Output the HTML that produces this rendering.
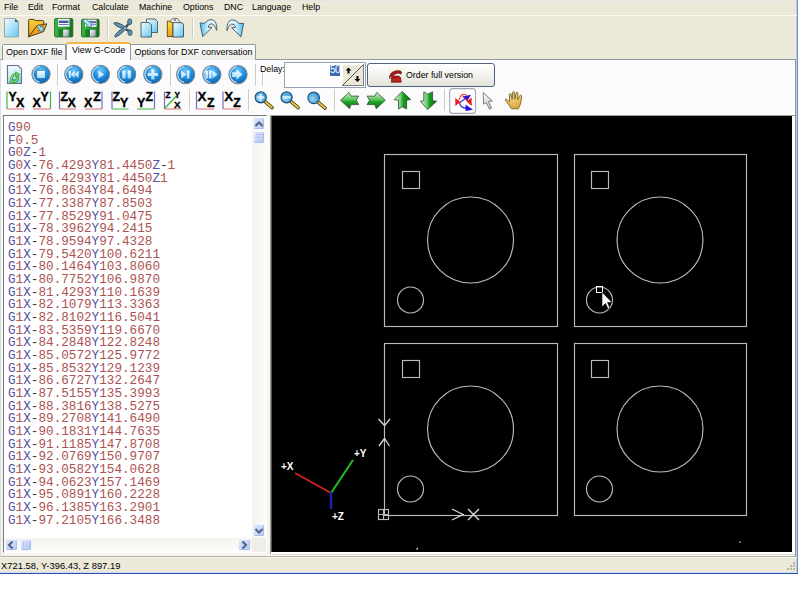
<!DOCTYPE html>
<html><head><meta charset="utf-8"><style>
*{margin:0;padding:0;box-sizing:border-box}
html,body{width:798px;height:605px;overflow:hidden;background:#fff}
body{position:relative;font-family:"Liberation Sans",sans-serif;font-size:8.8px;color:#000}
.a{position:absolute}
.t{position:absolute;white-space:nowrap;line-height:10px}
.code{font-family:"Liberation Mono",monospace;font-size:12.67px;line-height:12.67px;white-space:pre}
.code b{font-weight:normal;color:#52529E}
.code i{font-style:normal;color:#AC5252}
.code u{text-decoration:none;color:#3A3A3A}
.sep{position:absolute;background:#CFCDBF;border-right:1px solid #fff;width:2px}
.sb{position:absolute;background:linear-gradient(135deg,#DCE6FC,#B9CCF7);border:1px solid #F4F7FE;border-radius:2px;box-shadow:inset -1px -1px 0 #A8BDEA}
</style></head><body>
<!-- window bg -->
<div class="a" style="left:0;top:0;width:797px;height:573px;background:#ECE9D8"></div>
<div class="a" style="left:796px;top:0;width:1px;height:573px;background:#B8CCEC"></div>
<div class="a" style="left:797px;top:0;width:1px;height:574px;background:#6E8ED4"></div>
<div class="a" style="left:0;top:572px;width:797px;height:1px;background:#C8DAF0"></div>
<div class="a" style="left:0;top:573px;width:798px;height:1px;background:#3550AC"></div>
<!-- menu -->
<span class="t" style="left:4px;top:2px">File</span>
<span class="t" style="left:28px;top:2px">Edit</span>
<span class="t" style="left:52px;top:2px">Format</span>
<span class="t" style="left:92px;top:2px">Calculate</span>
<span class="t" style="left:139px;top:2px">Machine</span>
<span class="t" style="left:183px;top:2px">Options</span>
<span class="t" style="left:224px;top:2px">DNC</span>
<span class="t" style="left:252px;top:2px">Language</span>
<span class="t" style="left:302px;top:2px">Help</span>
<div class="a" style="left:0;top:15px;width:797px;height:1px;background:#FBFBF4"></div>
<div class="a" style="left:0;top:0;width:797px;height:1px;background:#E2E6E2"></div>
<div class="sep" style="left:107px;top:18px;height:20px"></div>
<div class="sep" style="left:192px;top:18px;height:20px"></div>
<!-- tab page -->
<div class="a" style="left:0;top:59px;width:796px;height:498px;background:linear-gradient(#FCFCFE,#F8F8F6 30%,#F4F3EE);border:1px solid #919B9C;border-left-color:#D4DEE6;border-bottom-color:#B4B2A4"></div>
<!-- tabs -->
<div class="a" style="left:2px;top:44px;width:64px;height:16px;background:linear-gradient(#FEFEFE,#ECEBE6);border:1px solid #919B9C;border-bottom:none;border-radius:2px 2px 0 0"></div>
<span class="t" style="left:6px;top:46.5px;font-size:9px">Open DXF file</span>
<div class="a" style="left:66px;top:42px;width:65px;height:18px;background:#FCFCFE;border:1px solid #919B9C;border-bottom:none;border-top:2px solid #F5B640;border-radius:3px 3px 0 0"></div>
<span class="t" style="left:72px;top:45px;font-size:9px">View G-Code</span>
<div class="a" style="left:131px;top:44px;width:125px;height:16px;background:linear-gradient(#FEFEFE,#ECEBE6);border:1px solid #919B9C;border-bottom:none;border-left:none;border-radius:0 2px 0 0"></div>
<span class="t" style="left:134.5px;top:46.5px;font-size:9px">Options for DXF conversation</span>
<!-- row separators -->
<div class="sep" style="left:57px;top:64px;height:22px"></div>
<div class="sep" style="left:170px;top:64px;height:22px"></div>
<div class="sep" style="left:255px;top:64px;height:22px"></div>
<div class="sep" style="left:262px;top:72px;height:14px"></div>
<div class="sep" style="left:189px;top:89px;height:22px"></div>
<div class="sep" style="left:248px;top:89px;height:22px"></div>
<div class="sep" style="left:334px;top:89px;height:22px"></div>
<div class="sep" style="left:444px;top:89px;height:22px"></div>
<span class="t" style="left:260px;top:64px">Delay:</span>
<!-- delay input -->
<div class="a" style="left:284px;top:62px;width:82px;height:26px;background:#fff;border:1px solid #94A2B4"></div>
<div class="a" style="left:330px;top:65px;width:10px;height:11px;background:#3A6CB8"></div>
<span class="t" style="left:330px;top:65px;color:#fff;font-size:10px;letter-spacing:-0.5px">50</span>
<div class="a" style="left:342px;top:64px;width:22px;height:22px;background:#ECE9D8;border-right:1px solid #808080;border-bottom:1px solid #808080"></div>
<svg class="a" style="left:342px;top:64px" width="22" height="22"><path d="M0.5 21.5L21.5 0.5" stroke="#505050" stroke-width="1"/><path d="M0.5 21V0.5H21" stroke="#fff" fill="none"/><path d="M6.5 3.5L9.5 6.5H7.5V9.5H5.5V6.5H3.5Z" fill="#000"/><path d="M15.5 18L18.5 15H16.5V12H14.5V15H12.5Z" fill="#000"/></svg>
<!-- order button -->
<div class="a" style="left:367px;top:63px;width:128px;height:24px;background:linear-gradient(#FFFFFF,#F0F0EA 60%,#E3E2DA);border:1px solid #4A6284;border-radius:3px"></div>
<span class="t" style="left:406px;top:70px">Order full version</span>
<!-- memo -->
<div class="a" style="left:3px;top:115px;width:264px;height:438px;background:#fff;border-left:1px solid #7A7A7A;border-top:1px solid #7A7A7A;border-right:1px solid #fff;border-bottom:1px solid #fff"></div>
<div class="a code" style="left:8px;top:122px"><b>G</b><i>90</i><br><b>F</b><i>0.5</i><br><b>G</b><i>0</i><b>Z</b><u>-</u><i>1</i><br><b>G</b><i>0</i><b>X</b><u>-</u><i>76.4293</i><b>Y</b><i>81.4450</i><b>Z</b><u>-</u><i>1</i><br><b>G</b><i>1</i><b>X</b><u>-</u><i>76.4293</i><b>Y</b><i>81.4450</i><b>Z</b><i>1</i><br><b>G</b><i>1</i><b>X</b><u>-</u><i>76.8634</i><b>Y</b><i>84.6494</i><br><b>G</b><i>1</i><b>X</b><u>-</u><i>77.3387</i><b>Y</b><i>87.8503</i><br><b>G</b><i>1</i><b>X</b><u>-</u><i>77.8529</i><b>Y</b><i>91.0475</i><br><b>G</b><i>1</i><b>X</b><u>-</u><i>78.3962</i><b>Y</b><i>94.2415</i><br><b>G</b><i>1</i><b>X</b><u>-</u><i>78.9594</i><b>Y</b><i>97.4328</i><br><b>G</b><i>1</i><b>X</b><u>-</u><i>79.5420</i><b>Y</b><i>100.6211</i><br><b>G</b><i>1</i><b>X</b><u>-</u><i>80.1464</i><b>Y</b><i>103.8060</i><br><b>G</b><i>1</i><b>X</b><u>-</u><i>80.7752</i><b>Y</b><i>106.9870</i><br><b>G</b><i>1</i><b>X</b><u>-</u><i>81.4293</i><b>Y</b><i>110.1639</i><br><b>G</b><i>1</i><b>X</b><u>-</u><i>82.1079</i><b>Y</b><i>113.3363</i><br><b>G</b><i>1</i><b>X</b><u>-</u><i>82.8102</i><b>Y</b><i>116.5041</i><br><b>G</b><i>1</i><b>X</b><u>-</u><i>83.5359</i><b>Y</b><i>119.6670</i><br><b>G</b><i>1</i><b>X</b><u>-</u><i>84.2848</i><b>Y</b><i>122.8248</i><br><b>G</b><i>1</i><b>X</b><u>-</u><i>85.0572</i><b>Y</b><i>125.9772</i><br><b>G</b><i>1</i><b>X</b><u>-</u><i>85.8532</i><b>Y</b><i>129.1239</i><br><b>G</b><i>1</i><b>X</b><u>-</u><i>86.6727</i><b>Y</b><i>132.2647</i><br><b>G</b><i>1</i><b>X</b><u>-</u><i>87.5155</i><b>Y</b><i>135.3993</i><br><b>G</b><i>1</i><b>X</b><u>-</u><i>88.3816</i><b>Y</b><i>138.5275</i><br><b>G</b><i>1</i><b>X</b><u>-</u><i>89.2708</i><b>Y</b><i>141.6490</i><br><b>G</b><i>1</i><b>X</b><u>-</u><i>90.1831</i><b>Y</b><i>144.7635</i><br><b>G</b><i>1</i><b>X</b><u>-</u><i>91.1185</i><b>Y</b><i>147.8708</i><br><b>G</b><i>1</i><b>X</b><u>-</u><i>92.0769</i><b>Y</b><i>150.9707</i><br><b>G</b><i>1</i><b>X</b><u>-</u><i>93.0582</i><b>Y</b><i>154.0628</i><br><b>G</b><i>1</i><b>X</b><u>-</u><i>94.0623</i><b>Y</b><i>157.1469</i><br><b>G</b><i>1</i><b>X</b><u>-</u><i>95.0891</i><b>Y</b><i>160.2228</i><br><b>G</b><i>1</i><b>X</b><u>-</u><i>96.1385</i><b>Y</b><i>163.2901</i><br><b>G</b><i>1</i><b>X</b><u>-</u><i>97.2105</i><b>Y</b><i>166.3488</i></div>
<!-- vscroll -->
<div class="a" style="left:252px;top:116px;width:14px;height:422px;background:linear-gradient(90deg,#F3F2EC,#FDFDFA)"></div>
<div class="sb" style="left:253px;top:117px;width:12px;height:13px"></div>
<div class="sb" style="left:253px;top:131px;width:12px;height:13px"></div>
<div class="sb" style="left:253px;top:524px;width:12px;height:13px"></div>
<!-- hscroll -->
<div class="a" style="left:4px;top:538px;width:248px;height:14px;background:linear-gradient(#F3F2EC,#FDFDFA)"></div>
<div class="a" style="left:252px;top:538px;width:14px;height:14px;background:#EEEDE6"></div>
<div class="sb" style="left:5px;top:539px;width:13px;height:12px"></div>
<div class="sb" style="left:20px;top:539px;width:12px;height:12px"></div>
<div class="sb" style="left:238px;top:539px;width:13px;height:12px"></div>
<svg class="a" style="left:0;top:0" width="798" height="605" fill="none" stroke="#4D6185" stroke-width="2">
<path d="M255.5 126 L259 122.5 L262.5 126"/>
<path d="M255.5 529 L259 532.5 L262.5 529"/>
<path d="M12.5 541.5 L9 545 L12.5 548.5"/>
<path d="M242.5 541.5 L246 545 L242.5 548.5"/>
<g stroke="#B2C2E8" stroke-width="1"><path d="M256 134.5h6M256 137.5h6M256 140.5h6"/><path d="M23.5 542v6M26.5 542v6M29.5 542v6"/></g>
</svg>
<!-- canvas -->
<div class="a" style="left:270px;top:115px;width:525px;height:439px;background:#fff;border-left:1px solid #A0A098;border-top:1px solid #A0A098"></div>
<div class="a" style="left:271px;top:116px;width:1px;height:436px;background:#505048"></div>
<div class="a" style="left:272px;top:116px;width:520px;height:436px;background:#000"></div>
<svg class="a" style="left:0;top:0" width="798" height="605">
<g fill="none" stroke="#BABABA" stroke-width="1.15">
<rect x="384.5" y="154.5" width="173" height="172"/>
<rect x="574.5" y="154.5" width="172" height="172"/>
<rect x="384.5" y="343.5" width="173" height="172"/>
<rect x="574.5" y="343.5" width="172" height="172"/>
<rect x="402.5" y="171.5" width="17" height="17"/>
<rect x="591.5" y="171.5" width="17" height="17"/>
<rect x="402.5" y="360.5" width="17" height="17"/>
<rect x="591.5" y="360.5" width="17" height="17"/>
<circle cx="470.5" cy="240" r="43"/>
<circle cx="660" cy="240" r="43"/>
<circle cx="470.5" cy="429" r="43"/>
<circle cx="660" cy="429" r="43"/>
<circle cx="410.5" cy="300" r="13"/>
<circle cx="599.5" cy="300" r="13"/>
<circle cx="410.5" cy="489" r="13"/>
<circle cx="599.5" cy="489" r="13"/>
<rect x="378.5" y="509.5" width="10" height="10"/>
<path d="M383.5 509v11M378 514.5h11"/>
<path d="M452 509 L463 514.5 L452 520" stroke="#D8D8D8" stroke-width="1.3"/>
<path d="M468 509 L479 520 M479 509 L468 520" stroke="#D8D8D8" stroke-width="1.4"/>
<path d="M378.5 419 L384.5 425.5 L390 419" stroke="#DCDCDC" stroke-width="1.3"/>
<path d="M379 446 L384.5 438.5 L389.5 446" stroke="#DCDCDC" stroke-width="1.3"/>
</g>
<line x1="295" y1="473" x2="331" y2="493" stroke="#D02020" stroke-width="2"/>
<line x1="331" y1="493" x2="353" y2="460" stroke="#20C020" stroke-width="2"/>
<line x1="331" y1="492" x2="331" y2="509" stroke="#2020B0" stroke-width="2.5"/>
<g fill="#fff" font-family="Liberation Sans" font-size="10" font-weight="bold">
<text x="281" y="470">+X</text><text x="354" y="457">+Y</text><text x="332" y="520">+Z</text>
</g>
<path d="M416.5 549.5l1.5-1.5M739.5 541.5l1 1" stroke="#D0D0D0" stroke-width="1.2"/>
<rect x="596.5" y="286.5" width="6" height="6" fill="none" stroke="#fff"/>
<path d="M602 292 L602 307 L605.5 303.5 L608 309 L610 308 L607.5 302.5 L612 302.5Z" fill="#fff" stroke="#000" stroke-width="0.6"/>
</svg>
<!-- status -->
<div class="a" style="left:0;top:557px;width:797px;height:1px;background:#F4F3EC"></div>
<div class="a" style="left:272px;top:554px;width:523px;height:1px;background:#E2E2DA"></div>
<svg class="a" style="left:785px;top:560px" width="12" height="12" fill="#B8B4A4"><rect x="8" y="2" width="2" height="2"/><rect x="5" y="5" width="2" height="2"/><rect x="8" y="5" width="2" height="2"/><rect x="2" y="8" width="2" height="2"/><rect x="5" y="8" width="2" height="2"/><rect x="8" y="8" width="2" height="2"/></svg>
<span class="t" style="left:1px;top:561px;font-size:9.4px">X721.58, Y-396.43, Z 897.19</span>
<svg class="a" style="left:0;top:0" width="798" height="120">
<defs>
<linearGradient id="gDoc" x1="0" y1="0" x2="1" y2="1"><stop offset="0" stop-color="#F6FDFF"/><stop offset="1" stop-color="#62C6F0"/></linearGradient>
<linearGradient id="gDoc2" x1="0" y1="0" x2="0.3" y2="1"><stop offset="0" stop-color="#F4FCFF"/><stop offset="0.6" stop-color="#CDEFFA"/><stop offset="1" stop-color="#7ED4F0"/></linearGradient>
<linearGradient id="gUndo2" x1="0" y1="0.5" x2="1" y2="0.5"><stop offset="0" stop-color="#48B8EC"/><stop offset="0.5" stop-color="#D8F4FE"/><stop offset="1" stop-color="#F4FCFF"/></linearGradient>
<linearGradient id="gYel" x1="0" y1="0" x2="0" y2="1"><stop offset="0" stop-color="#F4EC30"/><stop offset="1" stop-color="#F09820"/></linearGradient>
<linearGradient id="gFold2" x1="0" y1="0" x2="0" y2="1"><stop offset="0" stop-color="#F4B830"/><stop offset="1" stop-color="#E89818"/></linearGradient>
<linearGradient id="gGreenH" x1="0" y1="0" x2="1" y2="0"><stop offset="0" stop-color="#34B840"/><stop offset="0.5" stop-color="#2EA23A"/><stop offset="1" stop-color="#167020"/></linearGradient>
<linearGradient id="gCur" x1="0" y1="0" x2="1" y2="1"><stop offset="0" stop-color="#FFFFFF"/><stop offset="1" stop-color="#B8B8B8"/></linearGradient>
<linearGradient id="gHand" x1="0" y1="0" x2="0.3" y2="1"><stop offset="0" stop-color="#E4D4A0"/><stop offset="0.6" stop-color="#F0C868"/><stop offset="1" stop-color="#D8A848"/></linearGradient>
<linearGradient id="gFold" x1="0" y1="0" x2="0" y2="1"><stop offset="0" stop-color="#F8D040"/><stop offset="1" stop-color="#E89A10"/></linearGradient>
<linearGradient id="gShut" x1="0" y1="0" x2="1" y2="1"><stop offset="0" stop-color="#FFFFFF"/><stop offset="1" stop-color="#9090A8"/></linearGradient>
<linearGradient id="gGreen" x1="0" y1="0" x2="0" y2="1"><stop offset="0" stop-color="#40B048"/><stop offset="1" stop-color="#1E7A28"/></linearGradient>
<radialGradient id="gBtn" cx="0.5" cy="0.3" r="0.65"><stop offset="0" stop-color="#70CCFA"/><stop offset="0.55" stop-color="#2290E0"/><stop offset="1" stop-color="#0C68B8"/></radialGradient>
<linearGradient id="gSym" x1="0" y1="0" x2="0" y2="1"><stop offset="0" stop-color="#FAFDFF"/><stop offset="1" stop-color="#A0D8F6"/></linearGradient>
<radialGradient id="gLens" cx="0.4" cy="0.6" r="0.7"><stop offset="0" stop-color="#9ADAF8"/><stop offset="1" stop-color="#2A82C8"/></radialGradient>
<linearGradient id="gArr" x1="0" y1="0" x2="0" y2="1"><stop offset="0" stop-color="#D8F4D8"/><stop offset="0.45" stop-color="#58C058"/><stop offset="0.6" stop-color="#18A020"/><stop offset="1" stop-color="#0A6A12"/></linearGradient>
<linearGradient id="gArrV" x1="0" y1="0" x2="1" y2="0"><stop offset="0" stop-color="#E0F8E0"/><stop offset="0.4" stop-color="#70CC70"/><stop offset="0.55" stop-color="#18A020"/><stop offset="1" stop-color="#0A6A12"/></linearGradient>
<linearGradient id="gUndo" x1="0" y1="0" x2="1" y2="1"><stop offset="0" stop-color="#E8F8FE"/><stop offset="1" stop-color="#48B0E8"/></linearGradient>
</defs>
<!-- toolbar1 -->
<path d="M4.5 18.5H15L18.5 22V37H4.5Z" fill="url(#gDoc)" stroke="#9AA6AA"/>
<path d="M15 18.5L18.5 22H15Z" fill="#56606A"/>
<path d="M28.6 36.8V20.4Q28.6 19.4 29.6 19.4H34L35.5 20.6H42.8Q43.8 20.6 43.8 21.6V25.5L28.6 36.8Z" fill="url(#gFold)" stroke="#3E2C08" stroke-width="0.9"/>
<path d="M28.6 36.8L37.2 25.6L46.8 23.8L43.6 31.6Z" fill="url(#gFold2)" stroke="#3E2C08" stroke-width="0.9" stroke-linejoin="round"/>
<path d="M38.6 24.8L41.6 27.3L42.8 25.6L43.6 31.4L37.8 30.6L39.6 29.4L36.9 26.8Z" fill="#98E0F4" stroke="#2A4A5A" stroke-width="0.6"/>
<rect x="54.6" y="18.6" width="18.2" height="18.3" rx="1.2" fill="url(#gGreenH)" stroke="#1A5A22" stroke-width="0.8"/>
<rect x="58" y="18.9" width="11.5" height="7.8" fill="#F2F4F8"/>
<rect x="58.8" y="20.6" width="9.8" height="2.4" fill="#4A58A8"/>
<rect x="58.8" y="24" width="9.8" height="1" fill="#6A78B8"/>
<rect x="58.5" y="29.3" width="10.5" height="7.4" fill="#1E7A26"/>
<rect x="63.2" y="29.6" width="5.6" height="7" fill="url(#gShut)"/>
<rect x="81.5" y="19.3" width="17.6" height="17.6" rx="1.2" fill="url(#gGreenH)" stroke="#1A5A22" stroke-width="0.8"/>
<rect x="85" y="19.6" width="11.5" height="7.4" fill="#E8ECF2"/>
<rect x="88.5" y="21.2" width="7.5" height="2" fill="#5A68B0"/>
<rect x="88.5" y="24.2" width="7.5" height="1" fill="#7080C0"/>
<rect x="85.3" y="29.5" width="10.5" height="7.2" fill="#1E7A26"/>
<rect x="90" y="29.8" width="5.6" height="6.8" fill="url(#gShut)"/>
<path d="M82.5 20.5L86 18.8L89.5 22.2L91 21L91.2 27L86 26.4L87.6 25.1L84.5 22.8Z" fill="#A8E4F4" stroke="#30586C" stroke-width="0.6"/>
<!-- scissors -->
<g fill="#5E92B0" stroke="#2C4858" stroke-width="0.8">
<ellipse cx="119.6" cy="25.5" rx="6.2" ry="1.7" transform="rotate(24 119.6 25.5)"/>
<ellipse cx="120" cy="32.3" rx="6.8" ry="1.7" transform="rotate(-40 120 32.3)"/>
<path d="M124 27.5L128 23.5L129 24.5L126 28.5L129.5 30.5L128.5 31.5L124.5 29.5Z" fill="#3A5060"/>
<ellipse cx="129.7" cy="21.8" rx="2.1" ry="2.9"/>
<ellipse cx="130" cy="32.6" rx="2.1" ry="2.9"/>
</g>
<circle cx="125" cy="28.3" r="1.3" fill="#8AB8D0"/>
<!-- copy -->
<path d="M146.5 19H155L157.5 21.5V32.5H146.5Z" fill="url(#gDoc)" stroke="#3E5868" stroke-width="0.9"/>
<path d="M141 22.5H149L151.5 25V37H141Z" fill="url(#gDoc)" stroke="#3E5868" stroke-width="0.9"/>
<!-- paste -->
<rect x="167.3" y="21.2" width="5.6" height="15.4" fill="url(#gYel)" stroke="#5A4A10" stroke-width="0.9"/>
<path d="M173 22.6H181Q183.5 23 183.5 25.5V37H173Z" fill="url(#gDoc)" stroke="#3E4A50" stroke-width="0.9"/>
<path d="M170.5 22.5Q170.5 18.3 175 18.3Q179.5 18.3 179.5 22.5Z" fill="#E8E8E8" stroke="#606060" stroke-width="0.8"/>
<rect x="174.3" y="19.2" width="1.4" height="1.6" fill="#505050"/>
<!-- undo/redo -->
<path id="undo" d="M200 23L204.5 23.3Q208 19 212 19.6Q217.2 21 216.8 30.3Q215.2 27 214.2 25.2Q212.3 22.8 209.6 24.3Q208.5 25.3 208.4 27.2L212 27.5L202.7 36.6Z" fill="url(#gUndo2)" stroke="#34566A" stroke-width="0.9" stroke-linejoin="round"/>
<use href="#undo" transform="translate(443.7 0.3) scale(-1 1)"/>
<!-- row1 -->
<path d="M7.5 65.5H18L21.5 69V83.5H7.5Z" fill="url(#gDoc2)" stroke="#6A7478" stroke-width="1.1"/>
<g fill="none" stroke="#2A8A30" stroke-width="2.6" stroke-linecap="round"><path d="M11.5 79Q12 74.5 16.5 74.3"/><path d="M18 77Q17.5 81.5 13 81.7"/></g>
<g fill="none" stroke="#8EE080" stroke-width="1.4" stroke-linecap="round"><path d="M11.5 79Q12 74.5 16.5 74.3"/><path d="M18 77Q17.5 81.5 13 81.7"/></g>
<path d="M15.5 71.8L20 74.5L15.8 77.2Z" fill="#70D060" stroke="#2A8A30" stroke-width="0.6"/>
<path d="M14 79L9.5 81.6L13.8 84Z" fill="#70D060" stroke="#2A8A30" stroke-width="0.6"/>
<g><circle cx="41" cy="74.3" r="9.1" fill="url(#gBtn)" stroke="#7C8690" stroke-width="1.1"/><path d="M39.63 82.08A7.9 7.9 0 0 1 39.63 66.52" fill="none" stroke="#E8F6FE" stroke-opacity="0.85" stroke-width="1.1"/><circle cx="73.8" cy="74.4" r="9.1" fill="url(#gBtn)" stroke="#7C8690" stroke-width="1.1"/><path d="M72.43 82.18A7.9 7.9 0 0 1 72.43 66.62" fill="none" stroke="#E8F6FE" stroke-opacity="0.85" stroke-width="1.1"/><circle cx="100.4" cy="74.4" r="9.1" fill="url(#gBtn)" stroke="#7C8690" stroke-width="1.1"/><path d="M99.03 82.18A7.9 7.9 0 0 1 99.03 66.62" fill="none" stroke="#E8F6FE" stroke-opacity="0.85" stroke-width="1.1"/><circle cx="126.6" cy="74.4" r="9.1" fill="url(#gBtn)" stroke="#7C8690" stroke-width="1.1"/><path d="M125.23 82.18A7.9 7.9 0 0 1 125.23 66.62" fill="none" stroke="#E8F6FE" stroke-opacity="0.85" stroke-width="1.1"/><circle cx="152.8" cy="74.4" r="9.1" fill="url(#gBtn)" stroke="#7C8690" stroke-width="1.1"/><path d="M151.43 82.18A7.9 7.9 0 0 1 151.43 66.62" fill="none" stroke="#E8F6FE" stroke-opacity="0.85" stroke-width="1.1"/><circle cx="185.6" cy="74.6" r="9.1" fill="url(#gBtn)" stroke="#7C8690" stroke-width="1.1"/><path d="M184.23 82.38A7.9 7.9 0 0 1 184.23 66.82" fill="none" stroke="#E8F6FE" stroke-opacity="0.85" stroke-width="1.1"/><circle cx="211.8" cy="74.6" r="9.1" fill="url(#gBtn)" stroke="#7C8690" stroke-width="1.1"/><path d="M210.43 82.38A7.9 7.9 0 0 1 210.43 66.82" fill="none" stroke="#E8F6FE" stroke-opacity="0.85" stroke-width="1.1"/><circle cx="238" cy="74.6" r="9.1" fill="url(#gBtn)" stroke="#7C8690" stroke-width="1.1"/><path d="M236.63 82.38A7.9 7.9 0 0 1 236.63 66.82" fill="none" stroke="#E8F6FE" stroke-opacity="0.85" stroke-width="1.1"/></g>
<g fill="url(#gSym)">
<rect x="36.6" y="70.3" width="8.8" height="8.2" rx="1.2" stroke="#0A5A9A" stroke-width="0.6"/>
<rect x="68.6" y="70.8" width="2.2" height="7.2"/><path d="M70.6 74.4L74.6 70.8V78Z M74.4 74.4L78.6 70.8V78Z"/>
<path d="M98.4 70.4L104.2 74.4L98.4 78.4Z"/>
<rect x="122.3" y="70.4" width="3.2" height="8" rx="0.6"/><rect x="127.7" y="70.4" width="3.2" height="8" rx="0.6"/>
<path d="M151.3 69.2h3v3.7h3.7v3h-3.7v3.7h-3v-3.7h-3.7v-3h3.7Z"/>
<path d="M181.2 70.6L186.8 74.6L181.2 78.6Z"/><rect x="187" y="70.6" width="2.4" height="8"/>
<rect x="205.3" y="70.6" width="2.8" height="8"/><rect x="208.9" y="70.6" width="2.8" height="8"/><path d="M212.5 70.6L217.6 74.6L212.5 78.6Z"/>
<path d="M232.2 72.3h4.3v-3l5.8 5.3l-5.8 5.3v-3h-4.3Z"/>
</g>
<!-- row2 axis icons -->
<g stroke-width="1.2" fill="none">
<path d="M7 91.5V109" stroke="#40B848"/><path d="M7 109H24" stroke="#E08888"/>
<path d="M50.5 91.5V109" stroke="#40B848"/><path d="M33 109H50.5" stroke="#E08888"/>
<path d="M59.5 91.5V109" stroke="#7070C8"/><path d="M59.5 109H76" stroke="#E08888"/>
<path d="M102 91.5V109" stroke="#7070C8"/><path d="M85 109H102" stroke="#E08888"/>
<path d="M112 91.5V109" stroke="#7070C8"/><path d="M112 109H128.5" stroke="#60C060"/>
<path d="M154.5 91.5V109" stroke="#7070C8"/><path d="M137 109H154.5" stroke="#60C060"/>
<path d="M164.5 91.5V109" stroke="#7070C8"/><path d="M164.5 109H181.5" stroke="#E08888"/><path d="M164.5 108.5L176.5 96" stroke="#40B848" stroke-width="1.4"/>
<path d="M196.5 91.5V109" stroke="#7070C8"/><path d="M196.5 109H214" stroke="#E08888"/>
<path d="M223 91.5V109" stroke="#7070C8"/><path d="M223 109H240" stroke="#E08888"/>
</g>
<g font-family="Liberation Sans" font-weight="bold" fill="#000" stroke="#000" stroke-width="0.35">
<text x="8.6" y="101.2" font-size="12.3">Y</text><text x="16" y="106.9" font-size="12.5">X</text>
<text x="32.4" y="106.9" font-size="12.5">X</text><text x="40.4" y="101.2" font-size="12.3">Y</text>
<text x="60.6" y="101.2" font-size="12.3">Z</text><text x="67.6" y="106.9" font-size="12.5">X</text>
<text x="84" y="106.9" font-size="12.5">X</text><text x="93.2" y="101.2" font-size="12.3">Z</text>
<text x="112.6" y="101.2" font-size="12.3">Z</text><text x="120" y="106.9" font-size="12.5">Y</text>
<text x="137" y="106.9" font-size="12.5">Y</text><text x="145.4" y="101.2" font-size="12.3">Z</text>
<text x="165.4" y="97.8" font-size="8.2">Z</text><text x="174.6" y="98.2" font-size="8.2">Y</text><text x="174" y="107.8" font-size="9.8">X</text>
<text x="197.6" y="101.3" font-size="13.4">X</text><text x="207" y="107.2" font-size="12.3">Z</text>
<text x="224.2" y="101.3" font-size="13.4">X</text><text x="233.2" y="107.2" font-size="12.3">Z</text>
</g>
<!-- zoom -->
<g stroke="#2E2810" stroke-width="3.6" stroke-linecap="round"><path d="M265.5 102L272 107.5M291.5 102L298 107.5M318.5 102.5L325 108"/></g>
<g stroke="#F0C840" stroke-width="2" stroke-linecap="round"><path d="M265.5 102L272 107.5M291.5 102L298 107.5M318.5 102.5L325 108"/></g>
<g fill="url(#gLens)" stroke="#1E4E78" stroke-width="1.1">
<circle cx="260.7" cy="97.3" r="5.6"/><circle cx="286.6" cy="97.3" r="5.6"/><circle cx="313.7" cy="97.8" r="5.8"/>
</g>
<g fill="#E0F4FF"><path d="M259.7 93.8h2v2.5h2.5v2h-2.5v2.5h-2v-2.5h-2.5v-2h2.5Z"/><rect x="282.6" y="96.3" width="8" height="2"/></g>
<!-- arrows -->
<g stroke="#3A4A3A" stroke-width="0.8" stroke-linejoin="round">
<path d="M340.5 100.2L349 92.4L351 96.1L358.7 96.1L356.3 100.3L358.7 104.6L351 104.6L349.6 108.7Z" fill="url(#gArr)"/>
<path d="M385.3 100.2L376.8 92.4L374.8 96.1L367.1 96.1L369.5 100.3L367.1 104.6L374.8 104.6L376.2 108.7Z" fill="url(#gArr)"/>
<path d="M402.2 91.4L410.7 99.6L406.6 100.2L406.6 109L402.2 106.8L398.5 109L398.5 100.2L394.1 99.6Z" fill="url(#gArrV)"/>
<path d="M427.6 109.6L420.4 101.2L423.8 100.8L423.8 91.8L427.8 94.2L432.6 91.8L432.6 100.8L436.7 101.2Z" fill="url(#gArrV)"/>
</g>
<!-- pressed button -->
<rect x="449.7" y="88.6" width="25.8" height="24.8" rx="3" fill="#FDFDFF" stroke="#A0AAB4" stroke-width="1.1"/>
<g fill="none" stroke-width="1.2">
<path d="M459 100Q461 92 467 95.5" stroke="#E85050"/>
<path d="M459.5 103Q461 108.5 467 108" stroke="#3030C0"/>
<path d="M460 102.5L470 95" stroke="#3030D0"/>
<path d="M463 96L471.5 105" stroke="#E02020"/>
</g>
<path d="M455.3 98L455.3 106L460.5 102Z" fill="#F01818"/>
<path d="M471.6 97.5L471.6 105.5L466.5 101.5Z" fill="#F01818"/>
<path d="M470.8 95L462.5 96.5L467.5 100.5Z" fill="#3A10D8"/>
<path d="M473 109.8L465.5 104.5L465.5 111Z" fill="#2A10E0"/>
<!-- cursor -->
<path d="M483.2 92.4L483.6 104.3L486 102.4L489.6 109.2L491.6 108.2L488.4 101.5L492.4 101Z" fill="url(#gCur)" stroke="#808080" stroke-width="1" stroke-linejoin="round"/>
<!-- hand -->
<path d="M511.5 108.8L507.5 103L505.3 100.2Q505 98.8 506.4 99.2L509.6 101.8L509.4 94.6Q509.9 92.8 511 93.9L512.2 99.4L512.7 92Q513.5 90.6 514.4 92L514.9 99.2L516.2 92.8Q517.2 91.6 517.9 93L517.5 100L519.8 95.5Q520.8 94.5 521.7 95.8L521.1 101.6Q520.1 106 518.3 108.8Z" fill="url(#gHand)" stroke="#7A6230" stroke-width="0.9" stroke-linejoin="round"/>
<!-- phone -->
<path d="M388.6 68.4L390.6 70.4M396 67.6V69.2M402.6 68.6L400.8 70.2M401.8 76.4L403.2 77M388.8 82.6L390.4 81.6" stroke="#F0EC70" stroke-width="1.1"/>
<path d="M389.6 78.6Q389 72.2 396 70.8Q400.2 70 401.6 72L401 74.2Q399 72.6 396.6 73.4Q392.6 74.6 392.2 78.2Z" fill="#A81818" stroke="#5A0808" stroke-width="0.6"/>
<path d="M391.2 82.2L391.8 77.6L393.8 76H398.6L400.6 77.6L401.2 82.2Z" fill="#B01C1C" stroke="#5A0808" stroke-width="0.6"/>
<path d="M389.8 78.4L391.4 77.2" stroke="#F4E8E8" stroke-width="1"/>
<path d="M393 80H399.5" stroke="#E06060" stroke-width="0.8" stroke-dasharray="1 0.8"/>
</svg>

</body></html>
